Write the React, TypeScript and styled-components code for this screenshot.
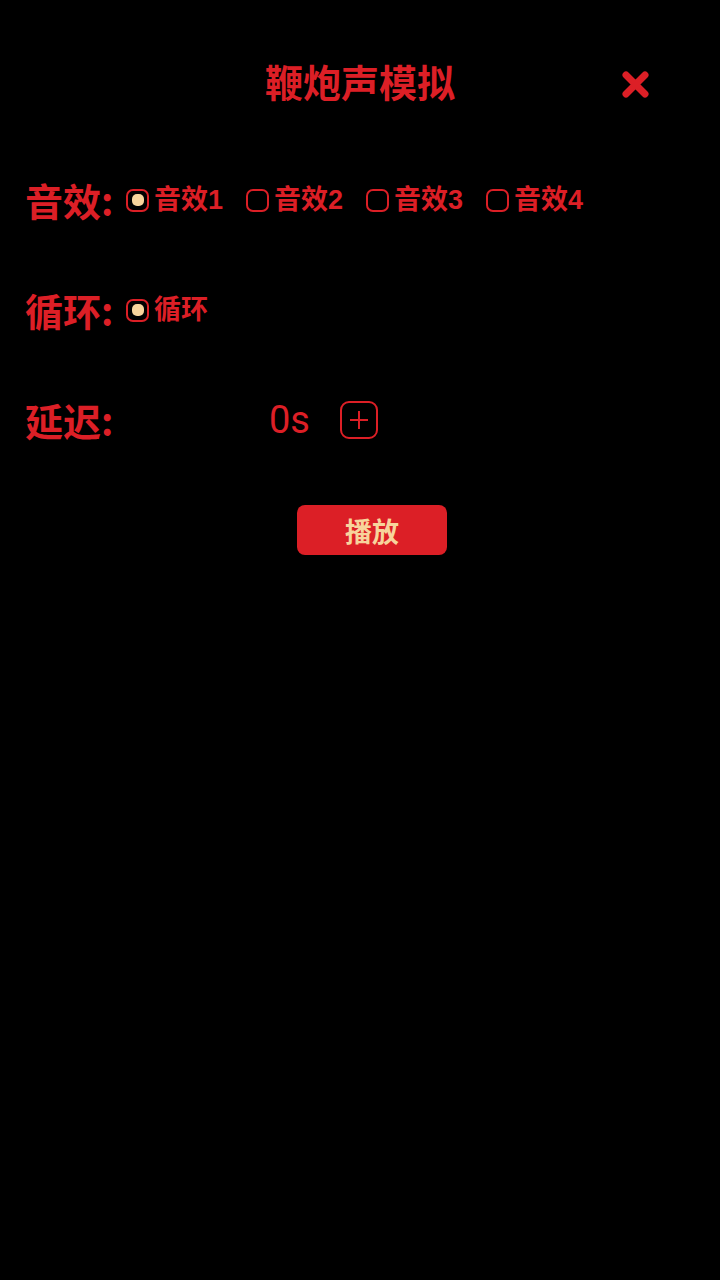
import styled, { createGlobalStyle } from 'styled-components'

const RED = '#dc1f26'
const CREAM = '#f7d49c'

const GlobalStyle = createGlobalStyle`
  html, body {
    margin: 0;
    padding: 0;
    background: #000;
  }
  body {
    font-family: "Liberation Sans", "Noto Sans CJK SC", sans-serif;
    color: ${RED};
  }
`

const soundOptions = ['音效1', '音效2', '音效3', '音效4']

const App = () => {
  return (
    <>
      <GlobalStyle />
      <Page>
        <Header>
          <Title>鞭炮声模拟</Title>
          <CloseButton aria-label="close">
            <svg width="27" height="27" viewBox="0 0 27 27">
              <path
                d="M4 4 L23 23 M23 4 L4 23"
                stroke={RED}
                strokeWidth="7"
                strokeLinecap="round"
              />
            </svg>
          </CloseButton>
        </Header>

        <Rows>
          <Row>
            <Label>音效:</Label>
            <Options>
              {soundOptions.map((name, i) => (
                <Option key={name}>
                  <RadioBox $checked={i === 0} />
                  <OptionText>{name}</OptionText>
                </Option>
              ))}
            </Options>
          </Row>

          <Row>
            <Label>循环:</Label>
            <Options>
              <Option>
                <RadioBox $checked />
                <OptionText>循环</OptionText>
              </Option>
            </Options>
          </Row>

          <Row>
            <Label>延迟:</Label>
            <Stepper>
              <Value>0s</Value>
              <PlusButton aria-label="plus">
                <svg width="20" height="20" viewBox="0 0 20 20">
                  <path d="M10 1 V19 M1 10 H19" stroke={RED} strokeWidth="2" />
                </svg>
              </PlusButton>
            </Stepper>
          </Row>
        </Rows>

        <PlayButton>播放</PlayButton>
      </Page>
    </>
  )
}

export default App

const Page = styled.div`
  width: 720px;
  min-height: 1280px;
  background: #000;
  padding-top: 51px;
  box-sizing: border-box;
`

const Header = styled.div`
  position: relative;
  height: 60px;
  display: flex;
  justify-content: center;
  align-items: center;
`

const Title = styled.h1`
  margin: 0;
  font-family: "Noto Sans CJK SC", sans-serif;
  font-size: 38px;
  font-weight: 700;
  color: ${RED};
  line-height: 1;
`

const CloseButton = styled.button`
  position: absolute;
  left: 622px;
  top: 20px;
  width: 27px;
  height: 27px;
  padding: 0;
  border: none;
  background: transparent;
  display: flex;
`

const Rows = styled.div`
  margin-top: 34px;
  padding-left: 25px;
  display: flex;
  flex-direction: column;
`

const Row = styled.div`
  height: 110px;
  display: flex;
  align-items: center;
`

const Label = styled.span`
  width: 101px;
  font-family: "Noto Sans CJK SC", sans-serif;
  font-size: 38px;
  font-weight: 700;
  line-height: 1;
  white-space: nowrap;
`

const Options = styled.div`
  display: flex;
  align-items: center;
`

const Option = styled.label`
  width: 120px;
  display: flex;
  align-items: center;
  gap: 5px;
`

const RadioBox = styled.span<{ $checked?: boolean }>`
  width: 23px;
  height: 23px;
  box-sizing: border-box;
  border: 2.5px solid ${RED};
  border-radius: 7px;
  display: flex;
  align-items: center;
  justify-content: center;

  &::after {
    content: '';
    width: 12px;
    height: 12px;
    border-radius: 5px;
    background: ${({ $checked }) => ($checked ? CREAM : 'transparent')};
  }
`

const OptionText = styled.span`
  font-size: 27px;
  font-weight: 700;
  line-height: 1;
`

const Stepper = styled.div`
  display: flex;
  align-items: center;
  padding-left: 143px;
  gap: 30px;
`

const Value = styled.span`
  font-family: Roboto, sans-serif;
  font-size: 38px;
  line-height: 1;
`

const PlusButton = styled.button`
  width: 38px;
  height: 38px;
  box-sizing: border-box;
  padding: 0;
  border: 2.5px solid ${RED};
  border-radius: 9px;
  background: transparent;
  display: flex;
  align-items: center;
  justify-content: center;
`

const PlayButton = styled.button`
  margin: 30px 0 0 297px;
  width: 150px;
  height: 50px;
  border: none;
  border-radius: 8px;
  background: ${RED};
  color: ${CREAM};
  font-family: "Noto Sans CJK SC", sans-serif;
  font-size: 27px;
  font-weight: 700;
  display: flex;
  align-items: center;
  justify-content: center;
`
